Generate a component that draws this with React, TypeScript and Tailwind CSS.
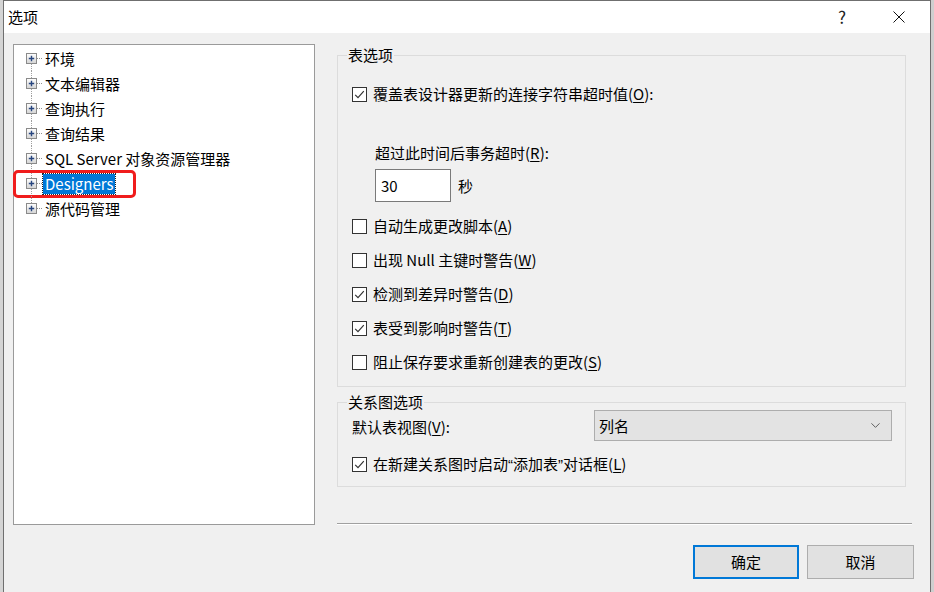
import React from 'react';
import { ChevronDown } from 'lucide-react';

const treeItems = ['环境', '文本编辑器', '查询执行', '查询结果', 'SQL Server 对象资源管理器', 'Designers', '源代码管理'];

const Check: React.FC<{ checked?: boolean }> = ({ checked }) => (
  <span className="w-[15px] h-[15px] border border-[#333333] bg-white flex items-center justify-center shrink-0">
    {checked && (
      <svg width="13" height="13" viewBox="0 0 13 13">
        <path d="M2.2 6.8 L5 9.6 L10.8 3.2" fill="none" stroke="#333333" strokeWidth="1.2" />
      </svg>
    )}
  </span>
);

const Expander: React.FC<{ first?: boolean; last?: boolean }> = ({ first, last }) => (
  <svg width="29" height="25" viewBox="0 0 29 25" className="shrink-0">
    <defs>
      <linearGradient id="exp" x1="0" y1="0" x2="0" y2="1">
        <stop offset="0" stopColor="#ffffff" />
        <stop offset="1" stopColor="#d4d4d4" />
      </linearGradient>
    </defs>
    {!first && <line x1="17.5" y1="0" x2="17.5" y2="7" stroke="#a0a0a0" strokeDasharray="1 1" />}
    {!last && <line x1="17.5" y1="18" x2="17.5" y2="25" stroke="#a0a0a0" strokeDasharray="1 1" />}
    <line x1="23" y1="12.5" x2="28" y2="12.5" stroke="#909090" strokeDasharray="1 1" />
    <rect x="12.5" y="7.5" width="10" height="10" fill="url(#exp)" stroke="#8a8a8a" />
    <path d="M14.8 12.5 H20.2 M17.5 9.8 V15.2" stroke="#27457f" strokeWidth="1.4" />
  </svg>
);

const Key: React.FC<{ k: string }> = ({ k }) => (
  <>
    (<span className="underline underline-offset-2">{k}</span>)
  </>
);

const CheckRow: React.FC<{ checked?: boolean; children: React.ReactNode }> = ({ checked, children }) => (
  <div className="flex items-center h-[20px] gap-[6px]">
    <Check checked={checked} />
    <span>{children}</span>
  </div>
);

const Quote: React.FC<{ children: React.ReactNode }> = ({ children }) => (
  <span className="font-['Liberation_Sans',sans-serif]">{children}</span>
);

export default function App() {
  return (
    <div className="w-[934px] h-[592px] flex bg-[#d8d8d8] overflow-hidden font-['Noto_Sans_CJK_SC',sans-serif] text-[15px] leading-[20px] text-black">
      <div className="w-[3px] shrink-0 bg-[#d4d4d4]" />
      <div className="w-[928px] shrink-0 flex flex-col border-l border-t border-r border-[#6f6f6f] bg-[#f0f0f0]">
        {/* title bar */}
        <div className="h-[32px] bg-white flex items-center shrink-0">
          <span className="ml-[4px]">选项</span>
          <span className="ml-auto mr-[29px] text-[17px] text-[#222]">?</span>
          <span className="w-[48px] flex justify-center mr-[7px]">
            <svg width="12" height="12" viewBox="0 0 12 12">
              <path d="M0.5 0.5 L11.5 11.5 M11.5 0.5 L0.5 11.5" stroke="#111" strokeWidth="1" />
            </svg>
          </span>
        </div>

        {/* body */}
        <div className="flex pl-[9px] pt-[11px] pr-[16px]">
          {/* tree */}
          <div className="w-[302px] h-[481px] border border-[#9a9a9a] bg-white pt-[1px] shrink-0">
            {treeItems.map((item, i) => (
              <div key={item} className="relative flex items-center h-[25px]">
                <Expander first={i === 0} last={i === treeItems.length - 1} />
                {item === 'Designers' ? (
                  <>
                    <span className="px-[2px] h-[20px] bg-[#0078d7] text-white outline outline-1 outline-dotted outline-[#222]">
                      {item}
                    </span>
                    <span className="absolute left-[-1px] top-[-1px] w-[123px] h-[28px] border-[3px] border-[#f01c1c] rounded-[5px]" />
                  </>
                ) : (
                  <span className="px-[2px]">{item}</span>
                )}
              </div>
            ))}
          </div>

          {/* right column */}
          <div className="w-[577px] ml-[22px] mt-[3px] flex flex-col">
            <fieldset className="w-[569px] border border-[#dcdcdc] pb-[14px]">
              <legend className="ml-[9px] px-[1px] leading-[16px]">表选项</legend>
              <div className="pl-[14px]">
                <div className="mt-[21px]">
                  <CheckRow checked>
                    覆盖表设计器更新的连接字符串超时值<Key k="O" />:
                  </CheckRow>
                </div>
                <div className="mt-[39px] ml-[23px]">
                  超过此时间后事务超时<Key k="R" />:
                </div>
                <div className="mt-[6px] ml-[23px] flex items-center">
                  <div className="w-[76px] h-[33px] border border-[#7a7a7a] bg-white flex items-center pl-[5px]">30</div>
                  <span className="ml-[7px]">秒</span>
                </div>
                <div className="mt-[14px] flex flex-col gap-[14px]">
                  <CheckRow>
                    自动生成更改脚本<Key k="A" />
                  </CheckRow>
                  <CheckRow>
                    出现 Null 主键时警告<Key k="W" />
                  </CheckRow>
                  <CheckRow checked>
                    检测到差异时警告<Key k="D" />
                  </CheckRow>
                  <CheckRow checked>
                    表受到影响时警告<Key k="T" />
                  </CheckRow>
                  <CheckRow>
                    阻止保存要求重新创建表的更改<Key k="S" />
                  </CheckRow>
                </div>
              </div>
            </fieldset>

            <fieldset className="w-[569px] mt-[7px] border border-[#dcdcdc] pb-[12px]">
              <legend className="ml-[9px] px-[1px] leading-[16px]">关系图选项</legend>
              <div className="pl-[14px] pr-[13px]">
                <div className="flex items-center">
                  <span className="w-[242px] pt-[3px]">
                    默认表视图<Key k="V" />:
                  </span>
                  <div className="flex-1 h-[31px] border border-[#adadad] bg-[#e3e3e3] flex items-center pl-[4px] pr-[8px]">
                    <span>列名</span>
                    <ChevronDown className="ml-auto text-[#555]" size={15} strokeWidth={1.5} />
                  </div>
                </div>
                <div className="mt-[13px]">
                  <CheckRow checked>
                    在新建关系图时启动<Quote>“</Quote>添加表<Quote>”</Quote>对话框<Key k="L" />
                  </CheckRow>
                </div>
              </div>
            </fieldset>

            <div className="mt-[36px] w-[575px] border-t border-[#a0a0a0] border-b border-b-white" />

            <div className="mt-[20px] flex justify-end gap-[8px]">
              <button className="w-[106px] h-[34px] border-2 border-[#0078d7] bg-[#e1e1e1]">确定</button>
              <button className="w-[107px] h-[34px] border border-[#adadad] bg-[#e1e1e1]">取消</button>
            </div>
          </div>
        </div>
      </div>
      <div className="flex-1 bg-[#cfcfcf]" />
    </div>
  );
}
